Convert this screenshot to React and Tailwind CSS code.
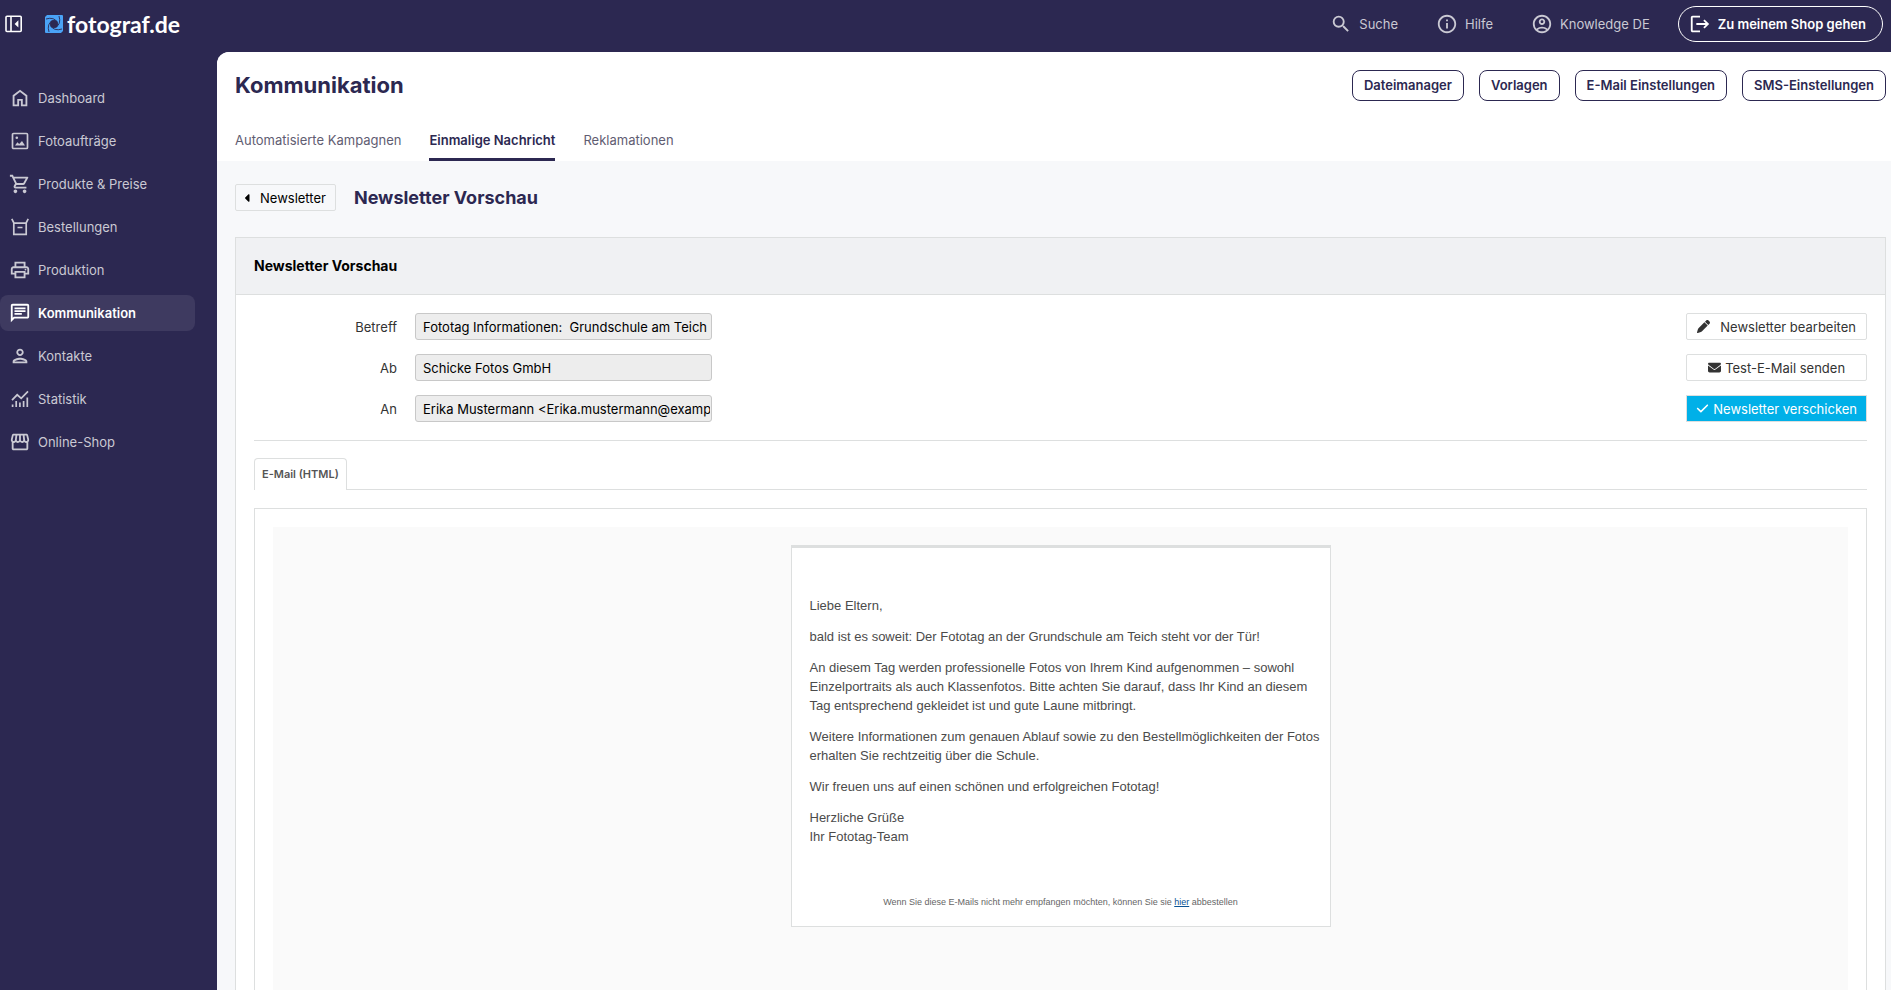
import React, { useState } from "react";
import {
  MdLogout,
  MdOutlineAccountCircle,
  MdOutlineChat,
  MdOutlineInfo,
  MdOutlinePerson,
  MdOutlinePrint,
  MdOutlineShoppingCart,
  MdOutlineStorefront,
  MdSearch,
} from "react-icons/md";
import { FaCaretLeft, FaCheck, FaEnvelope, FaPen } from "react-icons/fa6";

const HomeIcon = ({ className }) => (
  <svg viewBox="0 -960 960 960" fill="currentColor" className={className}>
    <path d="M240-200h120v-240h240v240h120v-360L480-740 240-560v360Zm-80 80v-480l320-240 320 240v480H520v-240h-80v240H160Z" />
  </svg>
);

const PhotoIcon = ({ className }) => (
  <svg viewBox="-1 -1 22 22" fill="none" stroke="currentColor" strokeWidth="1.7" className={className}>
    <rect x="2.5" y="2.5" width="15" height="15" rx="1" />
    <path d="M5 14.5l2.4-3.2 1.8 1.8 2.8-3 3 4.4z" fill="currentColor" stroke="none" />
    <circle cx="6.8" cy="6.8" r="1.3" fill="currentColor" stroke="none" />
  </svg>
);

const BoxIcon = ({ className }) => (
  <svg viewBox="-1 -1 22 22" fill="none" stroke="currentColor" strokeWidth="1.7" className={className}>
    <path d="M1.8 1.8l2 4V17.4h12.4V5.8l2-4M3.8 6.2h12.4M7.5 10.5h5" />
  </svg>
);

const ChartIcon = ({ className }) => (
  <svg viewBox="-1 -1 22 22" fill="none" stroke="currentColor" strokeWidth="1.7" className={className}>
    <path d="M2 11.2l5.2-5.4 4 3.6L18 2.4" />
    <path d="M2.6 18v-2.6M6.2 18v-6M9.9 18v-4.5M13.6 18v-6M17.3 18V8.5" />
  </svg>
);

const PanelIcon = () => (
  <svg viewBox="0 0 20 20" fill="none" stroke="currentColor" strokeWidth="1.6" className="size-5">
    <rect x="2" y="2.3" width="15.2" height="15.2" rx="1" />
    <path d="M7 2.3v15.2" />
    <path d="M14.4 6.3v7.2l-3.8-3.6z" fill="currentColor" stroke="none" />
  </svg>
);

const LogoIcon = () => (
  <svg viewBox="0 0 18 18" className="size-[18px]">
    <path d="M2 0h15a1 1 0 0 1 1 1v15l-2 2H1a1 1 0 0 1-1-1V2z" fill="#4aa3f7" />
    <circle cx="9" cy="9" r="4" fill="#2c2851" />
    <path
      d="M1 4Q9 1.5 12.6 7.5M14 1Q16.5 9 10.5 12.6M17 14Q9 16.5 5.4 10.5M4 17Q1.5 9 7.5 5.4"
      fill="none"
      stroke="#2c2851"
      strokeWidth="0.9"
    />
  </svg>
);

const navItems = [
  { label: "Dashboard", icon: HomeIcon },
  { label: "Fotoaufträge", icon: PhotoIcon },
  { label: "Produkte & Preise", icon: MdOutlineShoppingCart },
  { label: "Bestellungen", icon: BoxIcon },
  { label: "Produktion", icon: MdOutlinePrint },
  { label: "Kommunikation", icon: MdOutlineChat },
  { label: "Kontakte", icon: MdOutlinePerson },
  { label: "Statistik", icon: ChartIcon },
  { label: "Online-Shop", icon: MdOutlineStorefront },
];

const headerButtons = ["Dateimanager", "Vorlagen", "E-Mail Einstellungen", "SMS-Einstellungen"];

const tabs = ["Automatisierte Kampagnen", "Einmalige Nachricht", "Reklamationen"];

const fields = [
  { id: "betreff", label: "Betreff", value: "Fototag Informationen:  Grundschule am Teich" },
  { id: "ab", label: "Ab", value: "Schicke Fotos GmbH" },
  { id: "an", label: "An", value: "Erika Mustermann <Erika.mustermann@example.com>" },
];

const TopBar = () => (
  <header className="flex h-[52px] items-center justify-between pl-1 pr-2 pb-1 text-[13px] text-[#cac9d3]">
    <div className="flex items-center">
      <button type="button" aria-label="Menü einklappen" className="text-white">
        <PanelIcon />
      </button>
      <a href="#" className="ml-[21px] flex items-center gap-1 text-white">
        <LogoIcon />
        <span className="font-['Lato',sans-serif] text-[23px] leading-6 font-bold">fotograf.de</span>
      </a>
    </div>
    <div className="flex items-center">
      <a href="#" className="mr-[38px] flex items-center gap-[7px]">
        <MdSearch className="size-[22px]" />
        Suche
      </a>
      <a href="#" className="mr-[38px] flex items-center gap-[7px]">
        <MdOutlineInfo className="size-[22px]" />
        Hilfe
      </a>
      <a href="#" className="mr-7 flex items-center gap-[7px]">
        <MdOutlineAccountCircle className="size-[22px]" />
        Knowledge DE
      </a>
      <a
        href="#"
        className="flex h-9 items-center gap-[7px] rounded-full border border-white pr-4 pl-[10px] font-semibold text-white"
      >
        <MdLogout className="size-[22px]" />
        Zu meinem Shop gehen
      </a>
    </div>
  </header>
);

const Sidebar = () => (
  <nav className="w-[217px] shrink-0 pt-7 pr-[22px]">
    <ul className="flex flex-col gap-[7px]">
      {navItems.map(({ label, icon: Icon }) => (
        <li key={label}>
          <a
            href="#"
            className={`flex h-9 items-center gap-[7px] rounded-lg pl-[9px] text-[13px] ${
              label === "Kommunikation"
                ? "bg-[#3e3a60] font-semibold text-white"
                : "text-[#cac9d3]"
            }`}
          >
            <Icon className="size-[22px]" />
            {label}
          </a>
        </li>
      ))}
    </ul>
  </nav>
);

const EmailPreview = () => (
  <article className="w-[540px] border border-t-[3px] border-[#dddfdf] bg-white pt-12 pr-2 pb-[14px] pl-[18px] font-['Liberation_Sans',Arial,sans-serif] text-[13px] leading-[19px] text-[#4b4b4b]">
    <div className="flex flex-col gap-3">
      <p>Liebe Eltern,</p>
      <p>bald ist es soweit: Der Fototag an der Grundschule am Teich steht vor der Tür!</p>
      <p>
        An diesem Tag werden professionelle Fotos von Ihrem Kind aufgenommen – sowohl
        Einzelportraits als auch Klassenfotos. Bitte achten Sie darauf, dass Ihr Kind an diesem
        Tag entsprechend gekleidet ist und gute Laune mitbringt.
      </p>
      <p>
        Weitere Informationen zum genauen Ablauf sowie zu den Bestellmöglichkeiten der Fotos
        erhalten Sie rechtzeitig über die Schule.
      </p>
      <p>Wir freuen uns auf einen schönen und erfolgreichen Fototag!</p>
      <p>
        Herzliche Grüße
        <br />
        Ihr Fototag-Team
      </p>
    </div>
    <p className="mt-[47px] pr-[10px] text-center text-[9px] text-[#666]">
      Wenn Sie diese E-Mails nicht mehr empfangen möchten, können Sie sie{" "}
      <a href="#" className="text-[#0b5394] underline">
        hier
      </a>{" "}
      abbestellen
    </p>
  </article>
);

const App = () => {
  const [activeTab, setActiveTab] = useState("Einmalige Nachricht");

  return (
    <div className="flex min-h-screen flex-col bg-[#2c2851] font-['Inter',sans-serif] text-[13px] leading-5">
      <TopBar />
      <div className="flex grow">
        <Sidebar />
        <main className="flex min-w-0 grow flex-col overflow-hidden rounded-tl-xl bg-[#f7f8fa]">
          <div className="bg-white pt-[17px] pr-[5px] pl-[18px]">
            <div className="flex items-center justify-between">
              <h1 className="text-[22px] leading-8 font-bold text-[#2c2851]">Kommunikation</h1>
              <div className="flex gap-[15px]">
                {headerButtons.map((label) => (
                  <button
                    key={label}
                    type="button"
                    className="h-[31px] rounded-lg border border-[#2c2851] px-[11px] font-semibold text-[#2c2851]"
                  >
                    {label}
                  </button>
                ))}
              </div>
            </div>
            <div className="mt-[21px] flex gap-7">
              {tabs.map((tab) => (
                <button
                  key={tab}
                  type="button"
                  onClick={() => setActiveTab(tab)}
                  className={`h-[39px] rounded-t-xs border-b-3 pb-px ${
                    activeTab === tab
                      ? "border-[#2c2851] font-semibold text-[#2c2851]"
                      : "border-transparent text-[#5f5d72]"
                  }`}
                >
                  {tab}
                </button>
              ))}
            </div>
          </div>

          <div className="flex grow flex-col pt-[23px] pr-[5px] pl-[18px]">
            <div className="flex items-center gap-[18px]">
              <button
                type="button"
                className="flex h-[27px] items-center gap-[6px] rounded-xs border border-[#dddfdf] pr-[9px] pl-[6px] text-black"
              >
                <FaCaretLeft className="size-3" />
                Newsletter
              </button>
              <h2 className="text-lg leading-6 font-bold text-[#2c2851]">Newsletter Vorschau</h2>
            </div>

            <section className="mt-[26px] flex grow flex-col border border-b-0 border-[#dddfdf] bg-white">
              <h3 className="flex h-[57px] items-center border-b border-[#dddfdf] bg-[#f0f1f3] px-[18px] text-sm font-bold text-black">
                Newsletter Vorschau
              </h3>
              <div className="flex grow flex-col px-[18px] pt-[18px]">
                <div className="flex items-start justify-between border-b border-[#dddfdf] pb-[18px]">
                  <div className="flex flex-col gap-[14px]">
                    {fields.map((field) => (
                      <div key={field.id} className="flex items-center gap-[18px]">
                        <label htmlFor={field.id} className="w-[143px] text-right text-[#333]">
                          {field.label}
                        </label>
                        <input
                          id={field.id}
                          type="text"
                          readOnly
                          defaultValue={field.value}
                          className="h-[27px] w-[297px] rounded-[3px] border border-[#c8c8c8] bg-[#ededed] pr-px pl-[7px] text-black"
                        />
                      </div>
                    ))}
                  </div>
                  <div className="flex flex-col gap-[14px] text-[#333]">
                    <button
                      type="button"
                      className="flex h-[27px] items-center justify-center gap-[10px] rounded-xs border border-[#dddfdf] px-[9px]"
                    >
                      <FaPen className="size-[13px]" />
                      Newsletter bearbeiten
                    </button>
                    <button
                      type="button"
                      className="flex h-[27px] items-center justify-center gap-1 rounded-xs border border-[#dddfdf] px-[9px]"
                    >
                      <FaEnvelope className="size-[13px]" />
                      Test-E-Mail senden
                    </button>
                    <button
                      type="button"
                      className="flex h-[27px] items-center justify-center gap-1 border border-[#dddfdf] bg-[#00b0e8] px-[9px] text-white"
                    >
                      <FaCheck className="size-[13px]" />
                      Newsletter verschicken
                    </button>
                  </div>
                </div>

                <div className="mt-[17px] flex">
                  <button
                    type="button"
                    className="h-8 rounded-t-sm border border-b-0 border-[#dddfdf] px-[7px] pb-px text-[11px] font-semibold text-[#555]"
                  >
                    E-Mail (HTML)
                  </button>
                  <div className="grow border-b border-[#dddfdf]" />
                </div>

                <div className="mt-[18px] flex grow flex-col border border-b-0 border-[#dddfdf] px-[18px] pt-[18px]">
                  <div className="flex grow items-start justify-center bg-[#fafafa] py-[18px]">
                    <EmailPreview />
                  </div>
                </div>
              </div>
            </section>
          </div>
        </main>
      </div>
    </div>
  );
};

export default App;
